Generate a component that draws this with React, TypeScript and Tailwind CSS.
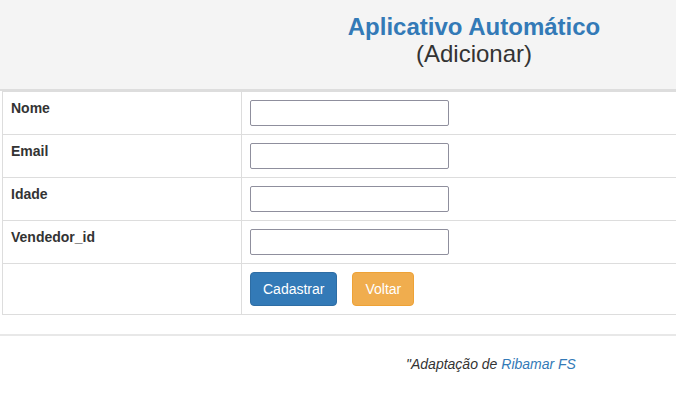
const rows = ["Nome", "Email", "Idade", "Vendedor_id"];

export default function App() {
  return (
    <div className="min-h-screen bg-white text-[14px] leading-[20px] text-[#333] font-['Liberation_Sans',Arial,sans-serif]">
      {/* Header */}
      <div className="h-[91px] bg-[#f4f4f4] border-b-2 border-[#dddddd] pl-[272px] text-center">
        <h3 className="pt-[14px] text-[24px] leading-[26px] font-bold text-[#337ab7]">Aplicativo Automático</h3>
        <div className="text-[24px] leading-[27px] text-[#333]">(Adicionar)</div>
      </div>

      {/* Form table */}
      <div className="ml-[2px] border-l border-t border-[#dddddd]">
        {rows.map((label) => (
          <div key={label} className="flex border-b border-[#dddddd]">
            <div className="w-[239px] shrink-0 border-r border-[#dddddd] px-2 pt-[6px] pb-2 font-bold">{label}</div>
            <div className="flex-1 p-2">
              <input
                type="text"
                className="block w-[199px] h-[26px] rounded-[2px] border border-[#8f8f9d] bg-white"
              />
            </div>
          </div>
        ))}
        <div className="flex border-b border-[#dddddd]">
          <div className="w-[239px] shrink-0 border-r border-[#dddddd]" />
          <div className="flex-1 p-2 flex">
            <button className="h-[34px] px-3 rounded-[4px] border border-[#2e6da4] bg-[#337ab7] text-white">
              Cadastrar
            </button>
            <button className="ml-[15px] h-[34px] px-3 rounded-[4px] border border-[#eea236] bg-[#f0ad4e] text-white">
              Voltar
            </button>
          </div>
        </div>
      </div>

      {/* Footer */}
      <hr className="mt-[19px] border-0 border-t-2 border-[#e8e8e8]" />
      <div className="pl-[406px] pt-[18px] italic">
        "Adaptação de <span className="text-[#337ab7]">Ribamar FS</span>
      </div>
    </div>
  );
}
